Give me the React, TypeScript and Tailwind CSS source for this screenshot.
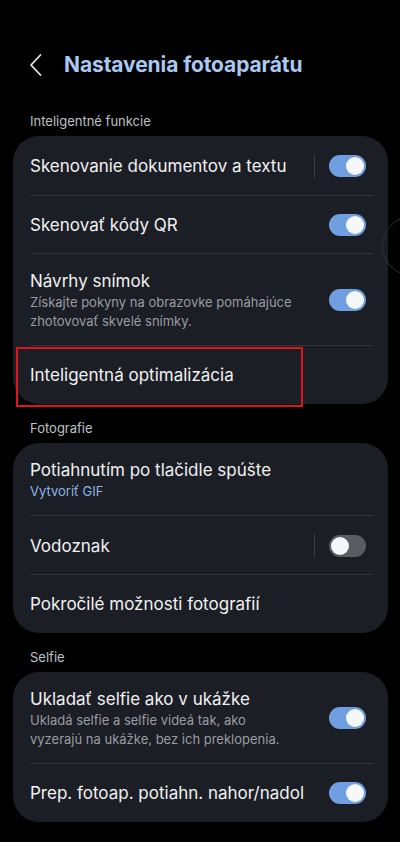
import React from "react";

function Toggle({ on, divider = false }: { on: boolean; divider?: boolean }) {
  return (
    <div className="flex items-center shrink-0">
      {divider && <div className="w-px h-[24px] bg-[#3a3d44] mr-[14px]" />}
      <div
        className={`w-[37px] h-[22px] rounded-full flex items-center px-[2px] ${
          on ? "bg-[#6f9fe0] justify-end" : "bg-[#5b5b62] justify-start"
        }`}
      >
        <div className="w-[18px] h-[18px] rounded-full bg-[#f5f7fb]" />
      </div>
    </div>
  );
}

function Row({
  title,
  sub,
  subBlue,
  toggle,
  divider,
  h,
  last,
  children,
}: {
  title: string;
  sub?: string;
  subBlue?: boolean;
  toggle?: boolean;
  divider?: boolean;
  h: string;
  last?: boolean;
  children?: React.ReactNode;
}) {
  return (
    <div className={`relative ${h}`}>
      <div className="h-full flex items-center pl-[17px] pr-[22px]">
        <div className="flex-1 min-w-0">
          <div className="text-[17px] leading-[22px] text-[#f1f1f3]">{title}</div>
          {sub && (
            <div
              className={`text-[13px] leading-[19px] mt-[1px] max-w-[264px] ${
                subBlue ? "text-[#8fb3e3]" : "text-[#9a9ca3]"
              }`}
            >
              {sub}
            </div>
          )}
        </div>
        {toggle !== undefined && <Toggle on={toggle} divider={divider} />}
      </div>
      {!last && <div className="absolute left-[17px] right-[15px] bottom-0 h-px bg-[#32353c]" />}
      {children}
    </div>
  );
}

function Section({ label, top }: { label: string; top: string }) {
  return (
    <div className={`${top} pb-[7px] pl-[30px] text-[13px] leading-[16px] text-[#bfc0c4]`}>{label}</div>
  );
}

export default function App() {
  return (
    <div
      className="relative w-[400px] h-[842px] bg-black overflow-hidden"
      style={{ fontFamily: "Inter, 'Noto Sans', sans-serif" }}
    >
      {/* Header */}
      <div className="h-[113px] pt-[46px]">
        <div className="flex items-center h-[38px]">
          <svg width="14" height="24" viewBox="0 0 14 24" className="ml-[29px]">
            <path d="M11.5 2 L2 12 L11.5 22" fill="none" stroke="#e8e8ea" strokeWidth="1.8" strokeLinecap="round" strokeLinejoin="round" />
          </svg>
          <div className="ml-[21px] text-[21px] font-bold text-[#a9c9f2] tracking-[-0.1px]">Nastavenia fotoaparátu</div>
        </div>
      </div>

      <Section label="Inteligentné funkcie" top="pt-0" />
      <div className="ml-[13px] mr-[12px] rounded-[26px] bg-[#1b1e24]">
        <Row h="h-[60px]" title="Skenovanie dokumentov a textu" toggle={true} divider />
        <Row h="h-[58px]" title="Skenovať kódy QR" toggle={true} />
        <Row
          h="h-[92px]"
          title="Návrhy snímok"
          sub="Získajte pokyny na obrazovke pomáhajúce zhotovovať skvelé snímky."
          toggle={true}
        />
        <Row h="h-[58px]" title="Inteligentná optimalizácia" last>
          <div className="absolute left-[3px] top-[1px] w-[287px] h-[60px] border-2 border-[#e0141c]" />
        </Row>
      </div>

      <Section label="Fotografie" top="pt-[16px]" />
      <div className="ml-[13px] mr-[12px] rounded-[26px] bg-[#1b1e24]">
        <Row h="h-[73px]" title="Potiahnutím po tlačidle spúšte" sub="Vytvoriť GIF" subBlue />
        <Row h="h-[59px]" title="Vodoznak" toggle={false} divider />
        <Row h="h-[58px]" title="Pokročilé možnosti fotografií" last />
      </div>

      <Section label="Selfie" top="pt-[16px]" />
      <div className="ml-[13px] mr-[12px] rounded-[26px] bg-[#1b1e24]">
        <Row
          h="h-[92px]"
          title="Ukladať selfie ako v ukážke"
          sub="Ukladá selfie a selfie videá tak, ako vyzerajú na ukážke, bez ich preklopenia."
          toggle={true}
        />
        <Row h="h-[58px]" title="Prep. fotoap. potiahn. nahor/nadol" toggle={true} last />
      </div>

      {/* floating edge handle */}
      <div className="absolute left-[382px] top-[216px] w-[60px] h-[60px] rounded-full border border-[#2c2f35]" />
    </div>
  );
}
